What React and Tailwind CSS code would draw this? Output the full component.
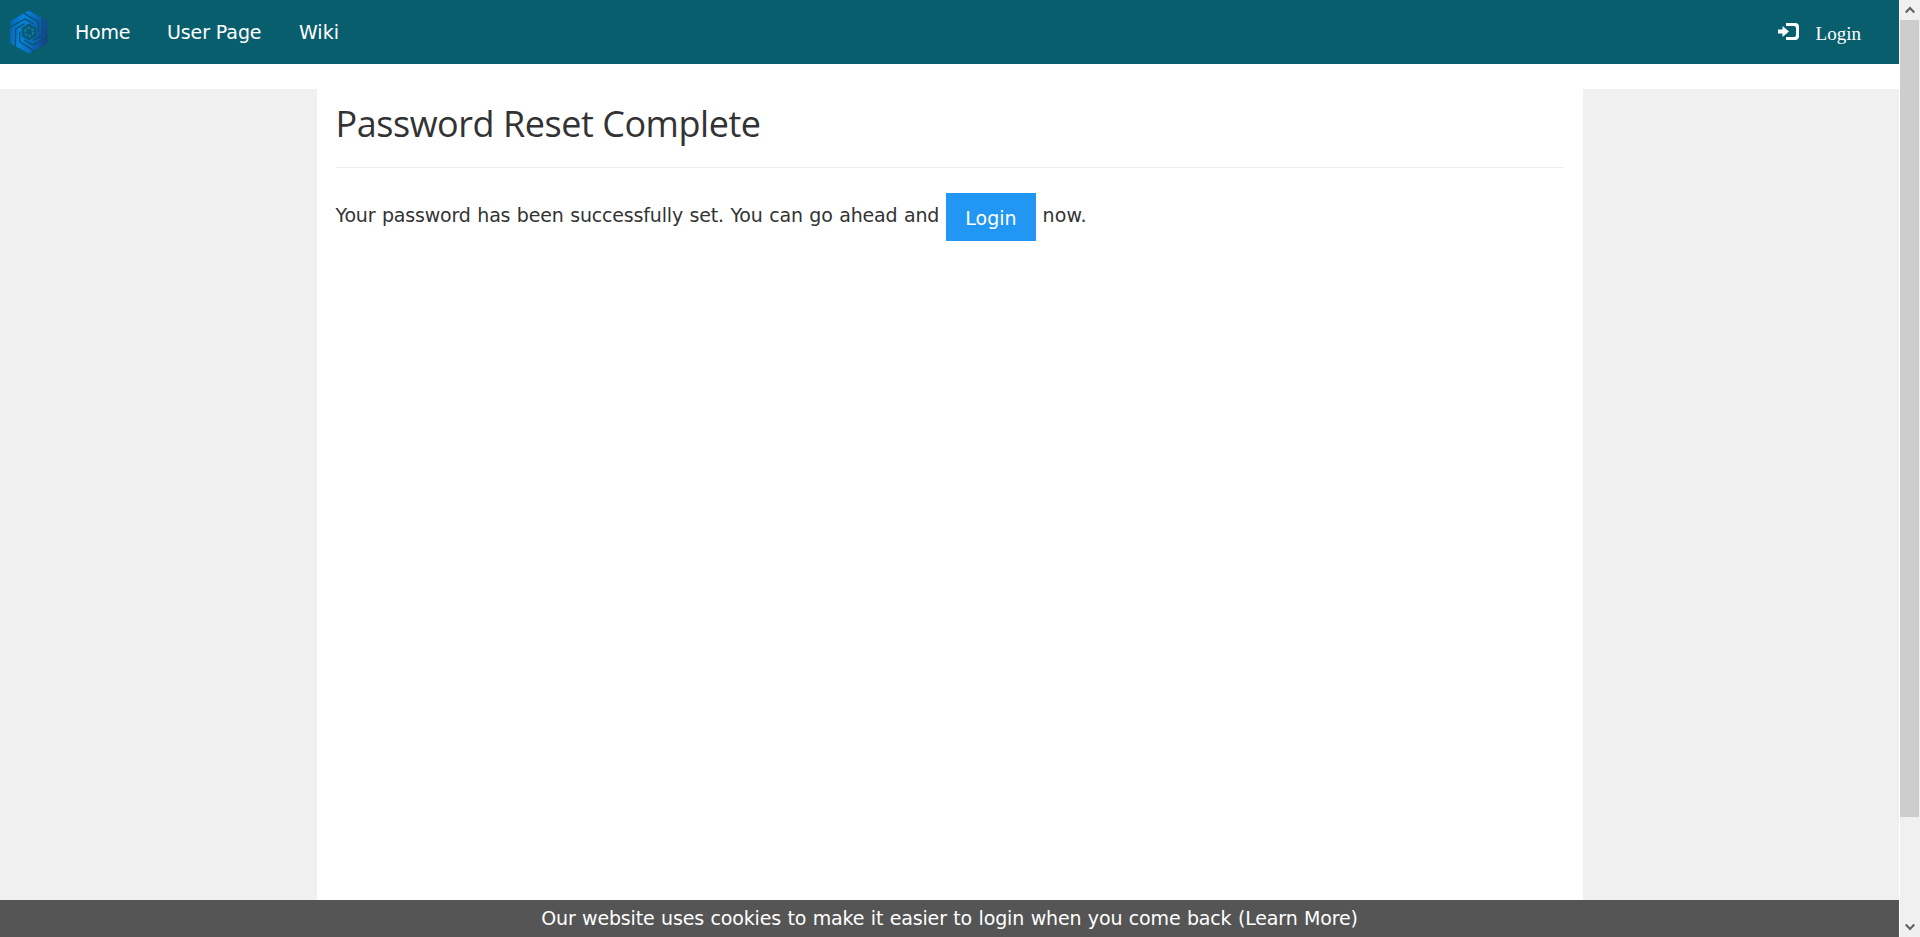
import React from "react";

function Logo() {
  const blades = [0, 60, 120, 180, 240, 300];
  return (
    <svg className="h-[44px] w-[38px] shrink-0" viewBox="-19 -22 38 44">
      <defs>
        <linearGradient id="hex" x1="0" y1="0.4" x2="1" y2="0.6">
          <stop offset="0" stopColor="#0664b4" />
          <stop offset="0.3" stopColor="#0784dc" />
          <stop offset="0.65" stopColor="#0b68b8" />
          <stop offset="1" stopColor="#173f86" />
        </linearGradient>
      </defs>
      <path d="M-.3-21.500 18.300-11V11L-.3 21.500-18.900 11V-11Z" fill="url(#hex)" />
      <path d="M0-8.500 7.400-4.250V4.250L0 8.500-7.400 4.250V-4.250Z" fill="#075a78" />
      {blades.map((a) => (
        <path
          key={a}
          transform={`rotate(${a})`}
          d="M-19-4.800-4-13 5-8"
          fill="none"
          stroke="#07526f"
          strokeWidth="1.300"
        />
      ))}
      <circle r="4" fill="none" stroke="#1a7ba6" strokeWidth="1.800" strokeDasharray="2.600 1.590" />
    </svg>
  );
}

function LoginIcon() {
  return (
    <svg className="h-[18px] w-[21px]" viewBox="0 0 21 18" fill="#fff">
      <path d="M0 6.500h4.500V3l6.500 5.500L4.500 14v-3.500H0Z" />
      <path d="M8 0h9q4 0 4 4v9q0 4-4 4H8v-3h8q2 0 2-2V5q0-2-2-2H8Z" />
    </svg>
  );
}

function Scrollbar() {
  return (
    <div className="flex w-[21px] shrink-0 flex-col border-l border-white bg-[#f0f0f0]">
      <div className="flex h-5 items-center pl-[5px]">
        <svg className="h-2 w-[10px]" viewBox="0 0 10 8" fill="none" stroke="#606060" strokeWidth="2.2">
          <path d="M.7 6.500 5 2l4.300 4.500" />
        </svg>
      </div>
      <div className="mr-px h-[797px] bg-[#cdcdcd]" />
      <div className="mt-auto flex h-[21px] items-center pl-[5px]">
        <svg className="h-2 w-[10px]" viewBox="0 0 10 8" fill="none" stroke="#606060" strokeWidth="2.2">
          <path d="M.7 1.500 5 6l4.300-4.500" />
        </svg>
      </div>
    </div>
  );
}

export default function App() {
  return (
    <div className="flex h-[937px] w-[1920px] overflow-hidden bg-white font-['DejaVu_Sans',sans-serif] text-[19px] text-[#333]">
      <div className="flex min-w-0 flex-1 flex-col">
        <header className="flex h-16 shrink-0 items-center bg-[#095e6e] pl-[10px] text-white">
          <Logo />
          <nav className="ml-[26px] flex">
            <a className="w-[93px] pl-px tracking-[-0.2px]">Home</a>
            <a className="w-[132px] tracking-[-0.1px]">User Page</a>
            <a>Wiki</a>
          </nav>
          <a className="mr-[38px] ml-auto flex items-center">
            <LoginIcon />
            <span className="mt-[4px] ml-[17px] font-['Liberation_Serif',serif]">Login</span>
          </a>
        </header>
        <div className="mt-[25px] flex flex-1 justify-center bg-[#f0f0f0]">
          <main className="w-[1266px] bg-white pr-[19px] pl-[19px]">
            <h1 className="h-[79px] border-b border-[#eee] pt-[10px] font-['Open_Sans',sans-serif] text-[36px] leading-[50px] tracking-[-0.46px]">
              Password Reset Complete
            </h1>
            <p className="mt-[25px] flex whitespace-nowrap leading-[44px]">
              <span className="w-[610px] tracking-[-0.17px] [word-spacing:0.65px]">
                Your password has been successfully set. You can go ahead and
              </span>
              <a className="h-12 w-[90px] bg-[#2196f3] pl-px text-center leading-[50px] text-white">Login</a>
              <span className="ml-[7px] tracking-[0.2px]">now.</span>
            </p>
          </main>
        </div>
        <footer className="h-[37px] shrink-0 bg-[#555] text-center leading-[36px] tracking-[-0.16px] text-white [word-spacing:0.65px]">
          Our website uses cookies to make it easier to login when you come back (Learn More)
        </footer>
      </div>
      <Scrollbar />
    </div>
  );
}
